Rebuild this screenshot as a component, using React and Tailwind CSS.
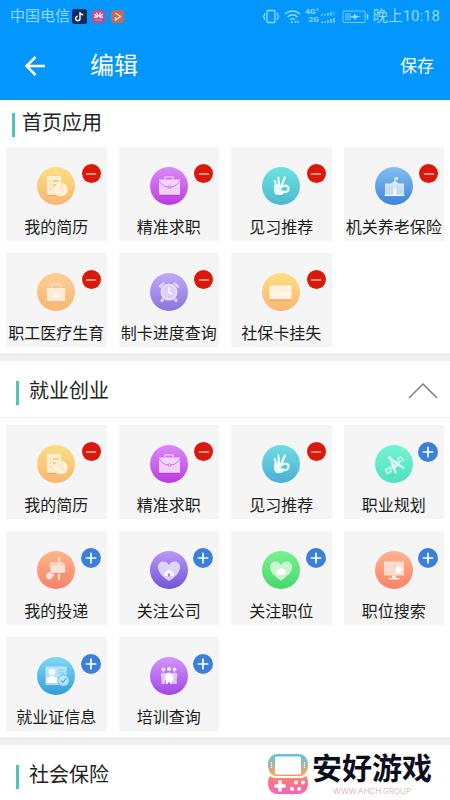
import { useState } from 'react';
import { Minus, Plus } from 'lucide-react';

const GLYPHS = {
  resume: (
    <>
      <path d="M10 9h14v19H10z" fill="#fff" fillOpacity=".65" />
      <path d="M13 14h1M16 14h6M13 18h1M16 18h3M13 22h1" stroke="#eeac4f" strokeWidth="1.2" />
      <circle cx="24" cy="22.5" r="6.8" fill="#fff1d8" />
      <path d="M24 17.5v4.5l3 3" stroke="#fbdcae" fill="none" />
      <path d="M10 28.4h9" stroke="#e09a4a" strokeWidth=".7" />
    </>
  ),
  briefcase: (
    <>
      <path d="M15 12.5V9.8h8v2.7" stroke="#f3c8fb" strokeWidth="1.3" fill="none" />
      <path d="M9 12.5h21V28H9z" fill="#fff" fillOpacity=".72" />
      <path d="M9 13.5c3 5 6 6.5 10.5 6.5S27 18.5 30 13.5" stroke="#c563e6" fill="none" strokeWidth=".9" />
      <path d="M18.2 19h2.6v2.2h-2.6z" fill="#f8ddfc" stroke="#bd58e0" strokeWidth=".6" />
      <path d="M9 28.3h21" stroke="#a52fc9" strokeWidth=".7" />
    </>
  ),
  hand: (
    <>
      <path d="m15.5 22-2.8-8M17 20l-.5-9.5M19 20l3.8-9.5" stroke="#e9fbfc" strokeWidth="2.2" strokeLinecap="round" />
      <path d="M12.2 18c2-1 6-1 8.300 1l-1.500 3.500c.5 2 1.500 3 3.500 3.500-2 2.500-6.500 3-9 1.500-1.800-2.500-2-6.500-1.300-9.500z" fill="#e9fbfc" />
      <path d="M19 20.500c2.500-2.300 5.500-2.500 6.800-1 1.400 1.700.6 4.600-1.300 5.200-1.500.4-3 .2-4.200-.5" stroke="#e9fbfc" strokeWidth="2.200" fill="none" strokeLinecap="round" />
      <path d="M13.4 28.4c3.3 1.3 7.2.6 9.3-1.2" stroke="#3d9eb0" strokeWidth=".6" fill="none" />
    </>
  ),
  building: (
    <>
      <path d="M20 15v-4.5" stroke="#fff" strokeWidth=".8" />
      <path d="M20 10.5h3v2h-3z" fill="#fff" />
      <path d="M10 16.500h6l4-3 4 3h5v12H10z" fill="#fff" fillOpacity=".75" />
      <path d="M12 19v8M14.5 19v8M17 18v9M22.5 18v9M25 19v8M27 19v8" stroke="#a6cff3" strokeWidth=".8" />
      <path d="M18.5 22h2.5v6.5h-2.5z" fill="#fff" />
      <path d="M9.5 28.5h20" stroke="#fff" />
    </>
  ),
  medical: (
    <>
      <path d="M15 14.5V11h9v3.500M11 12h17" stroke="#fff0dc" strokeWidth="1.2" strokeOpacity=".6" fill="none" />
      <path d="M10 15h18v13.500H10z" fill="#fff" fillOpacity=".68" />
      <path d="M18 20.500h2v2h2v2h-6v-2h2z" fill="#fff" />
      <path d="M10 28.8h18" stroke="#eda762" strokeWidth=".8" />
    </>
  ),
  clock: (
    <>
      <path d="m10.500 13.500 3-2.500M24.500 11l3 2.500M13 26l-1 1.500M25 26l1 1.500" stroke="#e0d5fb" strokeWidth="3" strokeLinecap="round" />
      <circle cx="19" cy="19" r="8.8" fill="#e9e0fc" stroke="#a48fe8" strokeWidth=".7" />
      <circle cx="19" cy="19" r="6.5" fill="#dccffa" />
      <path d="M19 14v5.500l3.500 1.500" stroke="#fff" strokeWidth="1.4" fill="none" />
    </>
  ),
  card: (
    <>
      <rect x="7.5" y="12.5" width="22" height="14" rx="1" fill="#fff" fillOpacity=".8" />
      <path d="M7.5 16h22v2h-22z" fill="#ffeccb" fillOpacity=".7" />
      <path d="M22 21.5h5" stroke="#fff" strokeWidth="1.5" />
      <path d="M7.5 27h22" stroke="#cf9352" strokeWidth=".8" />
    </>
  ),
  planning: (
    <>
      <path d="m9.500 24 5-2 2.500 5-5 2.500zM22 13.500l4-2.500 3 4.500-4.500 2z" fill="#d6fff3" fillOpacity=".85" />
      <path d="m14 22 9-7.500 2.500 3-9 7.500z" fill="#fff" fillOpacity=".4" />
      <path d="m14 12.500 14.500 10.500M15 13l5.500 14.500M18 22.5l6-3" stroke="#e7fff8" strokeWidth="2" fill="none" strokeLinecap="round" />
      <circle cx="13.2" cy="25.5" r="1.3" fill="#61d9bd" />
      <circle cx="25.300" cy="14.500" r="1.2" fill="#61d9bd" />
      <circle cx="14.5" cy="12.5" r="1.8" fill="#e7fff8" />
    </>
  ),
  mailbox: (
    <>
      <path d="M22 22v7" stroke="#ffe7de" strokeWidth="2" />
      <path d="M12 14c0-2 1.500-3 3-3h11l2 3v8H14z" fill="#fff" fillOpacity=".5" />
      <path d="M14 14.500h14V22H14z" fill="#fff" fillOpacity=".42" />
      <path d="M22 16V7.500" stroke="#fff0e9" strokeWidth="1.2" />
      <circle cx="22" cy="7.5" r="1.4" fill="#ffe7de" />
      <path d="M9 25c0-3 4-4.500 8-3.500.5 3-2.500 7-5 7-1.500 0-3-1.500-3-3.500z" fill="#ffe9e1" />
      <path d="M14 22.500h14" stroke="#ec815f" strokeWidth=".6" />
    </>
  ),
  heartHome: (
    <>
      <path d="M19 30c-5-3-11-8-11-14 0-6 8-7.500 11-2 3-5.500 11-4 11 2 0 6-6 11-11 14z" fill="#fff" fillOpacity=".68" />
      <path d="m14.500 22 4.500-3.500 4.500 3.500v3h-9z" fill="#fff" />
      <path d="M17.8 22.500h2.400V25.500h-2.400z" fill="#a580e8" />
    </>
  ),
  heartBag: (
    <>
      <path d="M19 30c-5-3-11-8-11-14 0-6 8-7.500 11-2 3-5.500 11-4 11 2 0 6-6 11-11 14z" fill="#fff" fillOpacity=".65" />
      <path d="M14.500 24v-3c0-5 9-5 9 0v3z" fill="#fff" />
      <path d="M12 24c2 2.500 5 5 7 6.500 2-1.500 5-4 7-6.500" stroke="#44c966" strokeWidth=".6" fill="none" />
    </>
  ),
  monitor: (
    <>
      <path d="M9 10.500h20v14H9z" fill="#fff" fillOpacity=".65" />
      <path d="M9 15h11M20 10.500V21M9 21h20" stroke="#ffc5b0" strokeWidth=".7" />
      <circle cx="23.5" cy="19" r="3.3" fill="#fff" />
      <path d="M17 24.500h4V27h3.500v1.500h-11V27H17z" fill="#fff0eb" />
    </>
  ),
  certificate: (
    <>
      <path d="M8.500 9.500h21V28h-21z" fill="#fff" fillOpacity=".55" />
      <circle cx="15" cy="15" r="3.3" fill="#fff" />
      <path d="M9.500 26v-3.500c0-4.500 11-4.500 11 0V26z" fill="#fff" />
      <path d="M21.500 13h6M21.500 16h6" stroke="#72c8ef" />
      <circle cx="26.5" cy="23.5" r="5.7" fill="#b9e5fa" stroke="#4bb0dc" strokeWidth=".8" />
      <path d="m24 23.500 2 2 3.500-4.500" stroke="#4ba5d0" strokeWidth="1.100" fill="none" />
    </>
  ),
  people: (
    <>
      <path d="M11.500 27v-5l-.8-4.500c0-2.500 5.500-2.500 5.500 0L15 27zM22.500 27 22 17.500c0-2.500 5.500-2.500 5.500 0l-.8 4.500v5z" fill="#fff" fillOpacity=".62" />
      <circle cx="13.5" cy="12.5" r="1.9" fill="#f5dfff" />
      <circle cx="24.5" cy="12.5" r="1.9" fill="#f5dfff" />
      <circle cx="19" cy="12" r="2" fill="#f9edff" />
      <path d="m16 27-.8-9c0-3.500 7.600-3.500 7.600 0l-.8 9h-2v-4h-2v4z" fill="#f9edff" />
      <circle cx="19.5" cy="21.5" r="4" fill="#fff" />
    </>
  ),
};

const HOME_APPS = [
  { name: '我的简历', icon: 'resume', color: 'from-[#fbdf83] to-[#f8b670]', added: true },
  { name: '精准求职', icon: 'briefcase', color: 'from-[#d98af7] to-[#bd36e0]', added: true },
  { name: '见习推荐', icon: 'hand', color: 'from-[#6ee2e0] to-[#4cb9cf]', added: true },
  { name: '机关养老保险', icon: 'building', color: 'from-[#84bff3] to-[#3c84d8]', added: true },
  { name: '职工医疗生育', icon: 'medical', color: 'from-[#fcd095] to-[#f8b670]', added: true },
  { name: '制卡进度查询', icon: 'clock', color: 'from-[#c0aaf8] to-[#8b74dc]', added: true },
  { name: '社保卡挂失', icon: 'card', color: 'from-[#fde085] to-[#fab470]', added: true },
];

const JOB_APPS = [
  { name: '我的简历', icon: 'resume', color: 'from-[#fbdf83] to-[#f8b670]', added: true },
  { name: '精准求职', icon: 'briefcase', color: 'from-[#d98af7] to-[#bd36e0]', added: true },
  { name: '见习推荐', icon: 'hand', color: 'from-[#70dce3] to-[#4bb0d8]', added: true },
  { name: '职业规划', icon: 'planning', color: 'from-[#75f4d2] to-[#4ee0c0]', added: false },
  { name: '我的投递', icon: 'mailbox', color: 'from-[#ffb58a] to-[#fa8268]', added: false },
  { name: '关注公司', icon: 'heartHome', color: 'from-[#b89af5] to-[#7650d8]', added: false },
  { name: '关注职位', icon: 'heartBag', color: 'from-[#7af090] to-[#42d96c]', added: false },
  { name: '职位搜索', icon: 'monitor', color: 'from-[#ffb18e] to-[#fb8267]', added: false },
  { name: '就业证信息', icon: 'certificate', color: 'from-[#7fd8f8] to-[#2c9fd8]', added: false },
  { name: '培训查询', icon: 'people', color: 'from-[#d195fb] to-[#a343e4]', added: false },
];

function StatusBar() {
  return (
    <div className="flex h-8 items-center justify-between px-2.5 text-[15px] leading-8 text-[#8fdcff]">
      <div className="flex items-center">
        <span className="mr-0.5">中国电信</span>
        <svg className="mr-1 h-[15px] w-[15px]" viewBox="0 0 15 15">
          <rect width="15" height="15" rx="2.5" fill="#142a58" />
          <path d="M8 3v6.500a2.200 2.200 0 1 1-2.200-2.200M8 3c.3 1.800 1.500 2.700 3.200 2.800" stroke="#e9f6ff" strokeWidth="1.5" fill="none" />
        </svg>
        <svg className="mr-1 h-[15px] w-[15px]" viewBox="0 0 15 15">
          <rect x="1" y="1" width="13" height="13" rx="2.5" fill="#b8528e" />
          <path d="M7.300 7.800 5.500 3.500M7.700 7.800l1.800-4.300M6.800 8 3.200 5M8.200 8l3.600-3M6.300 8.300H3M8.700 8.300H12" stroke="#fbdcec" strokeWidth="1.4" />
          <path d="M4.500 11h6" stroke="#dc91bb" />
        </svg>
        <svg className="h-[15px] w-[15px]" viewBox="0 0 15 15">
          <rect x="1" y="1" width="13" height="13" rx="2.5" fill="#bd6c62" />
          <path d="m5.500 4 5 3.500-5 3.500V8" stroke="#f5dfdd" strokeWidth="1.3" fill="none" />
        </svg>
      </div>
      <div className="flex items-center">
        <svg className="mr-1 h-[15px] w-[18px]" viewBox="0 0 18 15" fill="none" stroke="currentColor" strokeWidth="1.3">
          <rect x="5" y="1.5" width="8" height="12" rx="1" />
          <path d="M2.500 4v2l-1 1.500 1 1.500v2M15.500 4v2l1 1.500-1 1.500v2" />
        </svg>
        <svg className="mr-1 h-[15px] w-[17px]" viewBox="0 0 17 15" fill="none" stroke="currentColor" strokeWidth="1.4">
          <path d="M1 5c4.500-4 10.500-4 15 0M3.500 8c3-2.600 7-2.600 10 0M6 10.700c1.500-1.300 3.500-1.300 5 0" />
          <circle cx="8" cy="13" r="1" fill="currentColor" stroke="none" />
          <path d="M11.500 14v-2M14 14v-2" />
        </svg>
        <div className="mr-0.5 flex flex-col text-right font-[Roboto] text-[8px] leading-[8px] font-bold">
          <span>4G⁺</span>
          <span>2G</span>
        </div>
        <svg className="mr-1.5 h-[15px] w-[15px]" viewBox="0 0 15 15" stroke="currentColor" strokeWidth="1.5">
          <path d="M1 6.500V5M4 6.500V5M7 6.500V4M10 6.500V3M1 14v-1.500M4 14v-1.500M7 14v-3M10 14v-4M13 14V9" />
          <path d="M13 6.500V2" strokeOpacity=".4" />
        </svg>
        <svg className="mr-1 h-[15px] w-[27px]" viewBox="0 0 27 15" fill="none" stroke="currentColor">
          <rect x="1" y="2" width="22" height="11.5" rx="1" strokeOpacity=".8" />
          <path d="M3 4h6v7.500H3z" fill="currentColor" fillOpacity=".4" stroke="none" />
          <path d="m6 8 6-1.500V4.500l3 2.500 4 .5-5 1.500v2l-3-2.500z" fill="currentColor" stroke="none" />
          <path d="M25.500 5v5.500" strokeWidth="1.5" />
        </svg>
        <span>晚上10:18</span>
      </div>
    </div>
  );
}

function SectionTitle({ children, className = 'gap-2.5' }) {
  return (
    <h2 className={`flex items-end text-xl leading-7 font-normal text-[#222] ${className}`}>
      <span className="h-6 w-[3px] bg-[#55c0b8]" />
      {children}
    </h2>
  );
}

function AppTile({ app, onToggle }) {
  return (
    <li className="relative flex h-[94px] flex-col items-center bg-[#f5f5f5] pt-5">
      <div className={`h-[38px] w-[38px] rounded-full bg-linear-to-b ${app.color}`}>
        <svg className="h-full w-full" viewBox="0 0 38 38" fill="none" aria-hidden="true">
          {GLYPHS[app.icon]}
        </svg>
      </div>
      <span className="mt-[11px] text-base leading-6 whitespace-nowrap text-[#1c1c1c]">{app.name}</span>
      <button
        type="button"
        aria-label={`${app.added ? '移除' : '添加'}${app.name}`}
        onClick={onToggle}
        className={`absolute top-[17px] right-1.5 flex items-center justify-center rounded-full text-white ${app.added ? 'h-[19px] w-[19px] bg-[#d9190b]' : 'h-5 w-5 bg-[#3b7fdb]'}`}
      >
        {app.added ? <Minus className="h-4 w-4" strokeWidth={1.8} /> : <Plus className="h-4 w-4" strokeWidth={2.5} />}
      </button>
    </li>
  );
}

function AppGrid({ initial }) {
  const [apps, setApps] = useState(initial);
  const toggle = (index) => setApps(apps.map((a, i) => (i === index ? { ...a, added: !a.added } : a)));

  return (
    <ul className="grid grid-cols-4 gap-3 px-1.5 pb-1.5">
      {apps.map((app, i) => (
        <AppTile key={app.name} app={app} onToggle={() => toggle(i)} />
      ))}
    </ul>
  );
}

function Watermark() {
  return (
    <div className="absolute right-[18px] bottom-1 flex items-center gap-[3px]">
      <svg className="h-[42px] w-[42px]" viewBox="0 0 42 42" aria-hidden="true">
        <defs>
          <linearGradient id="console" x1="0" y1="0" x2="0" y2="1">
            <stop offset="0" stopColor="#55c8dc" />
            <stop offset=".5" stopColor="#f2a760" />
            <stop offset=".65" stopColor="#fb7b78" />
            <stop offset="1" stopColor="#f65fc4" />
          </linearGradient>
        </defs>
        <path
          d="M11 1h20c6 0 10 4 10 11s-4 11-8 11H9c-4 0-8-4-8-11S5 1 11 1zM3 23c3 2 5 2 8 2h20c3 0 5 0 8-2 2 3 2 5 2 7 0 7-4 11-10 11H11C5 41 1 37 1 30c0-2 0-4 2-7z"
          fill="url(#console)"
        />
        <rect x="8" y="3.5" width="26" height="18" rx="1.5" fill="#fff" />
        <path d="M4.500 9v6M37.500 9v6" stroke="#fff" strokeWidth="1.2" strokeDasharray="1.5 1" />
        <path d="M13 27.500v11M7.500 33h11" stroke="#fff" strokeWidth="3.5" />
        <circle cx="29" cy="29.5" r="2" fill="#fff" />
        <circle cx="36" cy="29.5" r="2" fill="#fff" />
        <circle cx="25" cy="36" r="2" fill="#fff" />
        <circle cx="32" cy="36" r="2" fill="#fff" />
      </svg>
      <div className="flex flex-col items-center">
        <span className="text-3xl leading-[34px] font-bold text-[#0d0d20]">安好游戏</span>
        <span className="font-[Inter] text-[8px] leading-[10px] font-light text-[#d3a9a4]">WWW.AHCH.GROUP</span>
      </div>
    </div>
  );
}

export default function App() {
  const [open, setOpen] = useState(true);

  return (
    <div className="relative min-h-screen bg-white font-[Roboto,'Noto_Sans_CJK_SC',sans-serif]">
      <header className="bg-[#0396fd]">
        <StatusBar />
        <div className="flex h-[68px] items-center pr-4 pl-6 text-white">
          <button type="button" aria-label="返回" className="mr-11">
            <svg className="h-[22px] w-[22px]" viewBox="0 0 22 22" fill="none" stroke="currentColor" strokeWidth="2.5">
              <path d="M21 11H3M11.500 2 2.500 11l9 9" />
            </svg>
          </button>
          <h1 className="flex-1 text-2xl leading-8 font-normal">编辑</h1>
          <button type="button" className="text-[17px] leading-6 font-normal">保存</button>
        </div>
      </header>

      <main>
        <section>
          <div className="px-3 pt-[9px] pb-2.5">
            <SectionTitle className="gap-[7px]">首页应用</SectionTitle>
          </div>
          <AppGrid initial={HOME_APPS} />
        </section>

        <section className="border-t-8 border-[#efefef]">
          <div className="flex items-end justify-between border-b border-[#efefef] px-4 pt-4 pb-3">
            <SectionTitle>就业创业</SectionTitle>
            <button type="button" aria-label="收起就业创业" aria-expanded={open} onClick={() => setOpen(!open)} className="-mr-1 self-center">
              <svg className="h-4 w-[30px]" viewBox="0 0 30 16" fill="none" stroke="#808080" strokeWidth="1.5">
                <path d={open ? 'M1 15 15 1l14 14' : 'M1 1l14 14L29 1'} />
              </svg>
            </button>
          </div>
          <div className="pt-[7px]">{open && <AppGrid initial={JOB_APPS} />}</div>
        </section>

        <section className="border-t-8 border-[#efefef] px-4 pt-4 pb-2">
          <SectionTitle>社会保险</SectionTitle>
        </section>
      </main>

      <Watermark />
    </div>
  );
}
